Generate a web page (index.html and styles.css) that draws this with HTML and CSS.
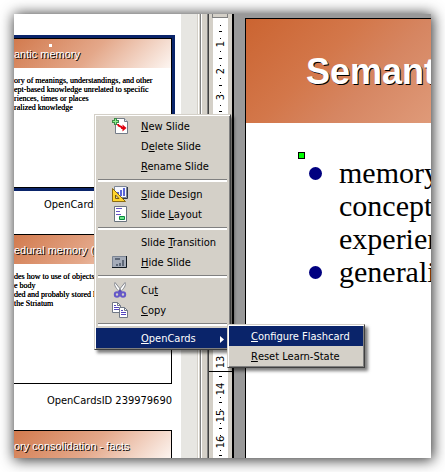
FILE: index.html
```html
<!DOCTYPE html>
<html lang="en">
<head>
<meta charset="utf-8">
<title>OpenCards</title>
<link rel="stylesheet" href="styles.css">
</head>
<body>
<main class="window">
  <div class="panes">
    <section class="slides" aria-label="Slides">
      <article class="slide">
        <div class="thumb selected">
          <h2 class="thumb-title">antic memory<span class="dot"></span></h2>
          <p class="thumb-body">ory of meanings, understandings, and other<br>ept-based knowledge unrelated to specific<br>riences, times or places<br>ralized knowledge</p>
        </div>
        <p class="slide-id partial">OpenCards</p>
      </article>
      <article class="slide">
        <div class="thumb">
          <h2 class="thumb-title">edural memory (v</h2>
          <p class="thumb-body">des how to use of objects<br>e body<br>ded and probably stored l<br>the Striatum</p>
        </div>
        <p class="slide-id">OpenCardsID 239979690</p>
      </article>
      <article class="slide">
        <div class="thumb">
          <h2 class="thumb-title">ory consolidation - facts</h2>
        </div>
      </article>
    </section>
    <div class="scrollbar"></div>
    <div class="splitter"></div>
    <div class="ruler">
      <svg width="23" height="444" viewBox="0 0 23 444" shape-rendering="crispEdges">
        <rect x="4" width="15" height="444" fill="#fff"/>
        <path d="M3.500 0v3.500h15V0" fill="#d4d0c8" stroke="#808080"/>
        <path d="M10 17.500h3M10 44.500h3M10 71.500h3M10 97.500h3M10 362.500h3M10 388.500h3M10 414.500h3M10 441.500h3" stroke="#000"/>
        <path d="M11 11.500h1M11 24.500h1M11 37.500h1M11 51.500h1M11 64.500h1M11 78.500h1M11 91.500h1M11 383.500h1M11 395.500h1M11 409.500h1M11 421.500h1M11 436.500h1" stroke="#000"/>
        <path d="M0 357.500h23" stroke="#000"/>
        <g class="numbers">
          <text transform="translate(15 30) rotate(-90)">1</text>
          <text transform="translate(15 57) rotate(-90)">2</text>
          <text transform="translate(15 83) rotate(-90)">3</text>
          <text transform="translate(15 348) rotate(-90)">13</text>
          <text transform="translate(15 375) rotate(-90)">14</text>
          <text transform="translate(15 402) rotate(-90)">15</text>
          <text transform="translate(15 428) rotate(-90)">16</text>
        </g>
      </svg>
    </div>
    <section class="editor" aria-label="Current slide">
      <div class="page">
        <h1 class="page-title">Semantic</h1>
        <div class="page-content">
          <span class="handle"></span>
          <ul class="points">
            <li>memory<br>concept<br>experien</li>
            <li>generaliz</li>
          </ul>
        </div>
      </div>
    </section>
  </div>

  <ul class="menu context" role="menu">
    <li><button class="item" role="menuitem"><svg class="icon" viewBox="0 0 16 16"><path d="M3.500.500h9l3 3v12h-12z" fill="#fff" stroke="#747c88"/><path d="M12.500.500v3h3" fill="#e4e8ef" stroke="#747c88"/><path d="M6 6c.500 4 3 .500 4 4h2" fill="none" stroke="#e00010" stroke-width="2"/><path d="M10.500 6.500L14.500 10l-4 3.500z" fill="#e00010"/><path d="M2 0h3v2h2v3H5v2H2V5H0V2h2z" fill="#3f8a4a"/><path d="M3 1h1v2h2v1H4v2H3V4H1V3h2z" fill="#8df08d"/></svg><span><u>N</u>ew Slide</span></button></li>
    <li><button class="item" role="menuitem"><span class="icon"></span><span>D<u>e</u>lete Slide</span></button></li>
    <li><button class="item" role="menuitem"><span class="icon"></span><span><u>R</u>ename Slide</span></button></li>
    <li class="separator" role="separator"></li>
    <li><button class="item" role="menuitem"><svg class="icon" viewBox="0 0 16 16"><path d="M2.500.500h12v11h-12z" fill="#f5f7ff" stroke="#7c8594"/><path d="M15.500 1v11.500H6" fill="none" stroke="#303846"/><path d="M5 6h2v4H5zM8 4h2v6H8zM11 2h2v8h-2z" fill="#5965d8"/><path d="M.500 2.500v13h13z" fill="#ffd52e" stroke="#8a6b12"/><path d="M3.500 9v3.500H7z" fill="#d4d0c8" stroke="#765b10"/></svg><span><u>S</u>lide Design</span></button></li>
    <li><button class="item" role="menuitem"><svg class="icon" viewBox="0 0 16 16"><path d="M2.500.500h12v15h-12z" fill="#fff" stroke="#68727d"/><path d="M4 2.500h6M4 5.500h4M4 8.500h5" stroke="#6654c4"/><path d="M7.500 10.500h5v3h-5z" fill="#6de58b" stroke="#078b3d"/></svg><span>Slide <u>L</u>ayout</span></button></li>
    <li class="separator" role="separator"></li>
    <li><button class="item" role="menuitem"><span class="icon"></span><span>Slide <u>T</u>ransition</span></button></li>
    <li><button class="item" role="menuitem"><svg class="icon" viewBox="0 0 16 16"><path d="M.500 2.500h14v11H.500z" fill="#a5acb9" stroke="#7b8493"/><path d="M14.500 2v11.500H0" fill="none" stroke="#101820"/><path d="M3 4h5v2H3zM4 10h2v2H4zM7 9h2v3H7zM10 6h2v6h-2z" fill="#5e6878"/></svg><span><u>H</u>ide Slide</span></button></li>
    <li class="separator" role="separator"></li>
    <li><button class="item" role="menuitem"><svg class="icon" viewBox="0 0 16 16"><path d="M3 .500c-1.500 3 1.500 6 4.500 9.500l1.500-2zM13 .500c1.500 3-1.500 6-4.500 9.500L7 8z" fill="#fff" stroke="#858991"/><path d="M8 8.500L6.500 11M8 8.500l1.500 2.500" stroke="#5c4eb8" stroke-width="2"/><circle cx="5" cy="12.500" r="2.200" fill="#d4d0c8" stroke="#6558c8" stroke-width="2"/><circle cx="11" cy="12.500" r="2.200" fill="#d4d0c8" stroke="#6558c8" stroke-width="2"/></svg><span>Cu<u>t</u></span></button></li>
    <li><button class="item" role="menuitem"><svg class="icon" viewBox="0 0 16 16"><path d="M.500.500h5l3 3v7h-8z" fill="#fff" stroke="#707886"/><path d="M5.500.500v3h3" fill="none" stroke="#707886"/><path d="M2 3.500h2M2 5.500h5M2 7.500h5" stroke="#5545c0"/><path d="M7.500 5.500h5l3 3v7h-8z" fill="#fff" stroke="#707886"/><path d="M12.500 5.500v3h3" fill="none" stroke="#707886"/><path d="M9 8.500h2M9 10.500h5M9 12.500h5" stroke="#5545c0"/></svg><span><u>C</u>opy</span></button></li>
    <li class="separator" role="separator"></li>
    <li class="has-submenu"><button class="item active" role="menuitem" aria-haspopup="true" aria-expanded="true"><span class="icon"></span><span><u>O</u>penCards</span><svg class="arrow" viewBox="0 0 4 7"><path d="M0 0v7l4-3.500z" fill="#fff"/></svg></button>
      <ul class="menu submenu" role="menu">
        <li><button class="item active" role="menuitem"><u>C</u>onfigure Flashcard</button></li>
        <li><button class="item" role="menuitem"><u>R</u>eset Learn-State</button></li>
      </ul>
    </li>
  </ul>
</main>
</body>
</html>
```
FILE: styles.css
```css
* { box-sizing: border-box; }
body, h1, h2, p, ul { margin: 0; padding: 0; }
ul { list-style: none; }
body {
  background: #fff;
  color: #000;
  font: 11px/20px "DejaVu Sans Condensed", "Noto Sans", sans-serif;
  padding: 14px;
  overflow: hidden;
}
.window {
  position: relative;
  height: calc(100vh - 28px);
  box-shadow: 1px 1px 13px 1px rgba(0, 0, 0, 0.8);
}
.panes {
  display: flex;
  height: 100%;
  overflow: hidden;
  background: #d4d0c8;
}

/* slide list */
.slides {
  flex: none;
  width: 167px;
  padding: 24px 9px 0 0;
  background: #fff;
  overflow: hidden;
}
.thumb {
  height: 150px;
  border: 1px solid #000;
  border-left: 0;
  background: #fff;
  overflow: hidden;
}
.thumb.selected {
  box-shadow: 0 0 0 3px #0a246a;
}
.thumb-title {
  position: relative;
  height: 29px;
  background: linear-gradient(135deg, #d27a4e, #e4a88a 50%, #fdf6f2);
  color: #fff;
  font: 11px/31px "Liberation Sans", sans-serif;
  text-shadow: 1px 1px 0 #000;
  white-space: nowrap;
}
.dot {
  position: absolute;
  left: 35px;
  top: 5px;
  width: 3px;
  height: 3px;
  background: #fff;
}
.thumb-body {
  padding-top: 8px;
  font: 8px/9px "Liberation Serif", serif;
  text-shadow: 0 0 0 #000;
  white-space: nowrap;
}
.slide-id {
  height: 46px;
  line-height: 34px;
  text-align: right;
  white-space: nowrap;
}
.slide-id.partial {
  padding-left: 30px;
  text-align: left;
}

.scrollbar {
  flex: none;
  width: 16px;
  background: #e7e6e2;
}
.splitter {
  flex: none;
  width: 12px;
  background: linear-gradient(90deg, #d4d0c8 1px, #fff 1px 2px, #d4d0c8 2px 3px, #808080 3px 4px, #fff 4px 5px, #d4d0c8 5px 10px, #808080 10px 11px, #404040 11px);
}
.ruler {
  flex: none;
  width: 25px;
  border-right: 2px solid #000;
}
.ruler svg { display: block; }
.numbers {
  font: 11px "DejaVu Sans Condensed", sans-serif;
  text-anchor: middle;
}

/* slide being edited */
.editor {
  flex: 1;
  min-width: 0;
  padding: 4px 0 0 11px;
  background: #999;
}
.page {
  height: 100%;
  border: solid #000;
  border-width: 1px 0 0 1px;
  background: #fff;
  overflow: hidden;
}
.page-title {
  height: 104px;
  padding-left: 60px;
  background: linear-gradient(135deg, #cb6431, #d3774a 40%, #d68662 65%, #df9a79);
  color: #fff;
  font: bold 36px/105px "Liberation Sans", sans-serif;
  text-shadow: 1px 1px 0 #000;
  white-space: nowrap;
}
.page-content {
  position: relative;
  padding: 33px 0 0 63px;
}
.handle {
  position: absolute;
  left: 52px;
  top: 29px;
  width: 7px;
  height: 7px;
  border: 1px solid #000;
  background: #0f0;
}
.points {
  font: 30px/33px "Liberation Serif", serif;
  white-space: nowrap;
}
.points li {
  display: flex;
  gap: 17px;
}
.points li::before {
  content: "";
  flex: none;
  width: 13px;
  height: 13px;
  margin-top: 11px;
  border-radius: 50%;
  background: #000080;
}

/* menus */
.menu {
  position: absolute;
  border: 1px solid;
  border-color: #d4d0c8 #404040 #404040 #d4d0c8;
  box-shadow: inset 1px 1px 0 #fff, inset -1px -1px 0 #808080, 3px 3px 3px rgba(0, 0, 0, 0.5);
  padding: 1px;
  background: #d4d0c8;
}
.context {
  left: 80px;
  top: 100px;
  width: 137px;
}
.submenu {
  left: calc(100% - 2px);
  top: -4px;
  width: 138px;
}
.has-submenu { position: relative; }
.item {
  display: flex;
  align-items: center;
  width: 100%;
  height: 20px;
  padding: 2px 5px 0 16px;
  border: 0;
  background: none;
  color: #000;
  font: inherit;
  line-height: 18px;
  white-space: nowrap;
}
.item.active {
  background: #0a246a;
  color: #fff;
}
.submenu .item { padding-left: 22px; }
.icon {
  flex: none;
  width: 16px;
  height: 16px;
  margin: 0 13px 2px 0;
}
.arrow {
  width: 4px;
  height: 7px;
  margin-left: auto;
}
.separator {
  height: 8px;
  padding: 3px 2px;
}
.separator::before {
  content: "";
  display: block;
  height: 2px;
  border-top: 1px solid #808080;
  background: #fff;
}
```
